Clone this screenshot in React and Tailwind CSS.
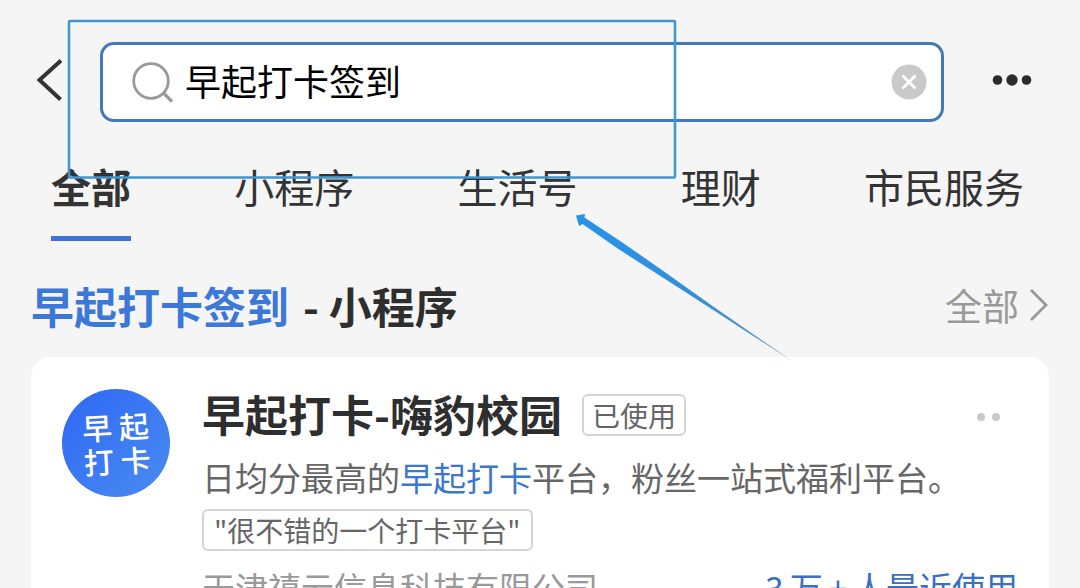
import React from 'react';

const tabs = ['全部', '小程序', '生活号', '理财', '市民服务'];

const SearchHeader = () => (
  <header className="flex items-center pt-[42px] pl-9 pr-12">
    <button type="button" aria-label="返回" className="shrink-0 pb-1">
      <svg width="28" height="42" viewBox="0 0 28 42" fill="none" className="block">
        <path d="M25 1.500 L3.500 21 L24.500 40.500" stroke="#333" strokeWidth="4" />
      </svg>
    </button>

    <form className="ml-9 mr-12 flex h-20 min-w-0 flex-1 items-center rounded-[14px] border-[3px] border-[#4479b8] bg-white pl-7 pr-3.5" onSubmit={e => e.preventDefault()}>
      <svg width="42" height="42" viewBox="0 0 42 42" fill="none" className="block shrink-0">
        <circle cx="20" cy="20" r="17.300" stroke="#999" strokeWidth="2.800" />
        <path d="M32 31.500 L41 40.500" stroke="#999" strokeWidth="3.200" />
      </svg>
      <input
        type="text"
        aria-label="搜索"
        defaultValue="早起打卡签到"
        className="ml-3 min-w-0 flex-1 bg-transparent pb-1 text-4xl text-black outline-none"
      />
      <button type="button" aria-label="清除" className="shrink-0">
        <svg width="36" height="36" viewBox="0 0 36 36" className="block">
          <circle cx="18" cy="18" r="17.500" fill="#c9c9c9" />
          <path d="M11.500 11.500 L24.500 24.500 M24.500 11.500 L11.500 24.500" stroke="#fff" strokeWidth="2.800" />
        </svg>
      </button>
    </form>

    <button type="button" aria-label="更多" className="shrink-0 pb-1">
      <svg width="40" height="12" viewBox="0 0 40 12" fill="#2b2b2b" className="block">
        <circle cx="5.500" cy="6" r="4.800" />
        <circle cx="20" cy="6" r="5.700" />
        <circle cx="34.500" cy="6" r="4.800" />
      </svg>
    </button>
  </header>
);

const TabBar = () => (
  <nav className="mt-[38px] flex justify-between pl-[51px] pr-14">
    {tabs.map((tab, i) => (
      <button
        key={tab}
        type="button"
        className={
          i === 0
            ? 'border-b-[5px] border-[#3f72d8] pb-6 text-[40px] leading-[52px] font-bold text-[#333]'
            : 'border-b-[5px] border-transparent pb-6 text-[40px] leading-[52px] text-[#333]'
        }
      >
        {tab}
      </button>
    ))}
  </nav>
);

const ResultCard = () => (
  <article className="mx-[31px] mt-6 flex gap-8 rounded-[20px] bg-white px-[31px] pt-8 pb-10">
    <div className="flex size-[108px] shrink-0 items-center justify-center rounded-full bg-gradient-to-br from-[#2f66f5] to-[#4a8cf0]">
      <div className="-rotate-3 text-[30px] leading-[34px] font-medium text-white">
        早 起
        <br />
        打 卡
      </div>
    </div>

    <div className="min-w-0 flex-1">
      <div className="flex items-center">
        <h3 className="pb-1 text-[43px] leading-[48px] font-bold whitespace-nowrap text-[#2e2e2e]">早起打卡-嗨豹校园</h3>
        <span className="ml-5 rounded-md border-2 border-[#d4d4d4] px-2 text-[28px] leading-[38px] whitespace-nowrap text-[#666]">已使用</span>
        <button type="button" aria-label="更多操作" className="mr-4 ml-auto shrink-0 pt-1">
          <svg width="26" height="10" viewBox="0 0 26 10" fill="#c8c8c8" className="block">
            <circle cx="5" cy="5" r="4" />
            <circle cx="20" cy="5" r="4" />
          </svg>
        </button>
      </div>
      <p className="mt-2.5 text-[33px] leading-[52px] whitespace-nowrap text-[#666]">
        日均分最高的<em className="text-[#3b76cf] not-italic">早起打卡</em>平台，粉丝一站式福利平台。
      </p>
      <div className="mt-1.5 flex">
        <span className="rounded-md border-2 border-[#d4d4d4] px-2.5 text-[28px] leading-[38px] whitespace-nowrap text-[#666]">"很不错的一个打卡平台"</span>
      </div>
      <div className="mt-2.5 flex justify-between text-[33px] leading-[52px] whitespace-nowrap">
        <span className="text-[#999]">天津禧云信息科技有限公司</span>
        <span className="flex gap-1.5 text-[#3b6fc0]">
          <span>3</span>
          <span>万</span>
          <span>+</span>
          <span>人最近使用</span>
        </span>
      </div>
    </div>
  </article>
);

// Blue frame and arrow drawn over the page as a hint
const Annotation = () => (
  <svg className="pointer-events-none absolute inset-0 h-full w-full" fill="none">
    <defs>
      <linearGradient id="arrow" gradientUnits="userSpaceOnUse" x1="576" y1="215" x2="792" y2="361">
        <stop offset="0" stopColor="#2793ea" />
        <stop offset="0.500" stopColor="#318fdb" />
        <stop offset="1" stopColor="#5d93b5" />
      </linearGradient>
    </defs>
    <rect x="69" y="21" width="606" height="156.500" rx="1" stroke="#3f97d0" strokeWidth="2.600" />
    <path d="M576 215.500 L585 214 L584.500 217.500 L622 242.200 L661.500 269.800 L710.700 304.800 L792 361 L709.300 307.500 L658.500 274.800 L618 248.800 L582.500 224 L579 226 Z" fill="url(#arrow)" />
  </svg>
);

const App = () => (
  <div className="relative h-screen overflow-hidden bg-[#f5f5f5] font-['Noto_Sans_CJK_SC',sans-serif]">
    <SearchHeader />
    <TabBar />
    <main>
      <div className="mt-9 flex items-center justify-between pr-[31px] pl-[31px]">
        <h2 className="flex gap-3.5 text-[43px] leading-[56px] font-bold text-[#2e2e2e]">
          <span className="text-[#3b78d8]">早起打卡签到</span>
          <span>- 小程序</span>
        </h2>
        <a href="#all" className="flex items-center gap-2 text-[37px] leading-[52px] text-[#999]">
          全部
          <svg width="22" height="36" viewBox="0 0 22 36" fill="none" className="block">
            <path d="M4 3 L19 18 L4 33" stroke="#999" strokeWidth="2.800" />
          </svg>
        </a>
      </div>
      <ResultCard />
    </main>
    <Annotation />
  </div>
);

export default App;
